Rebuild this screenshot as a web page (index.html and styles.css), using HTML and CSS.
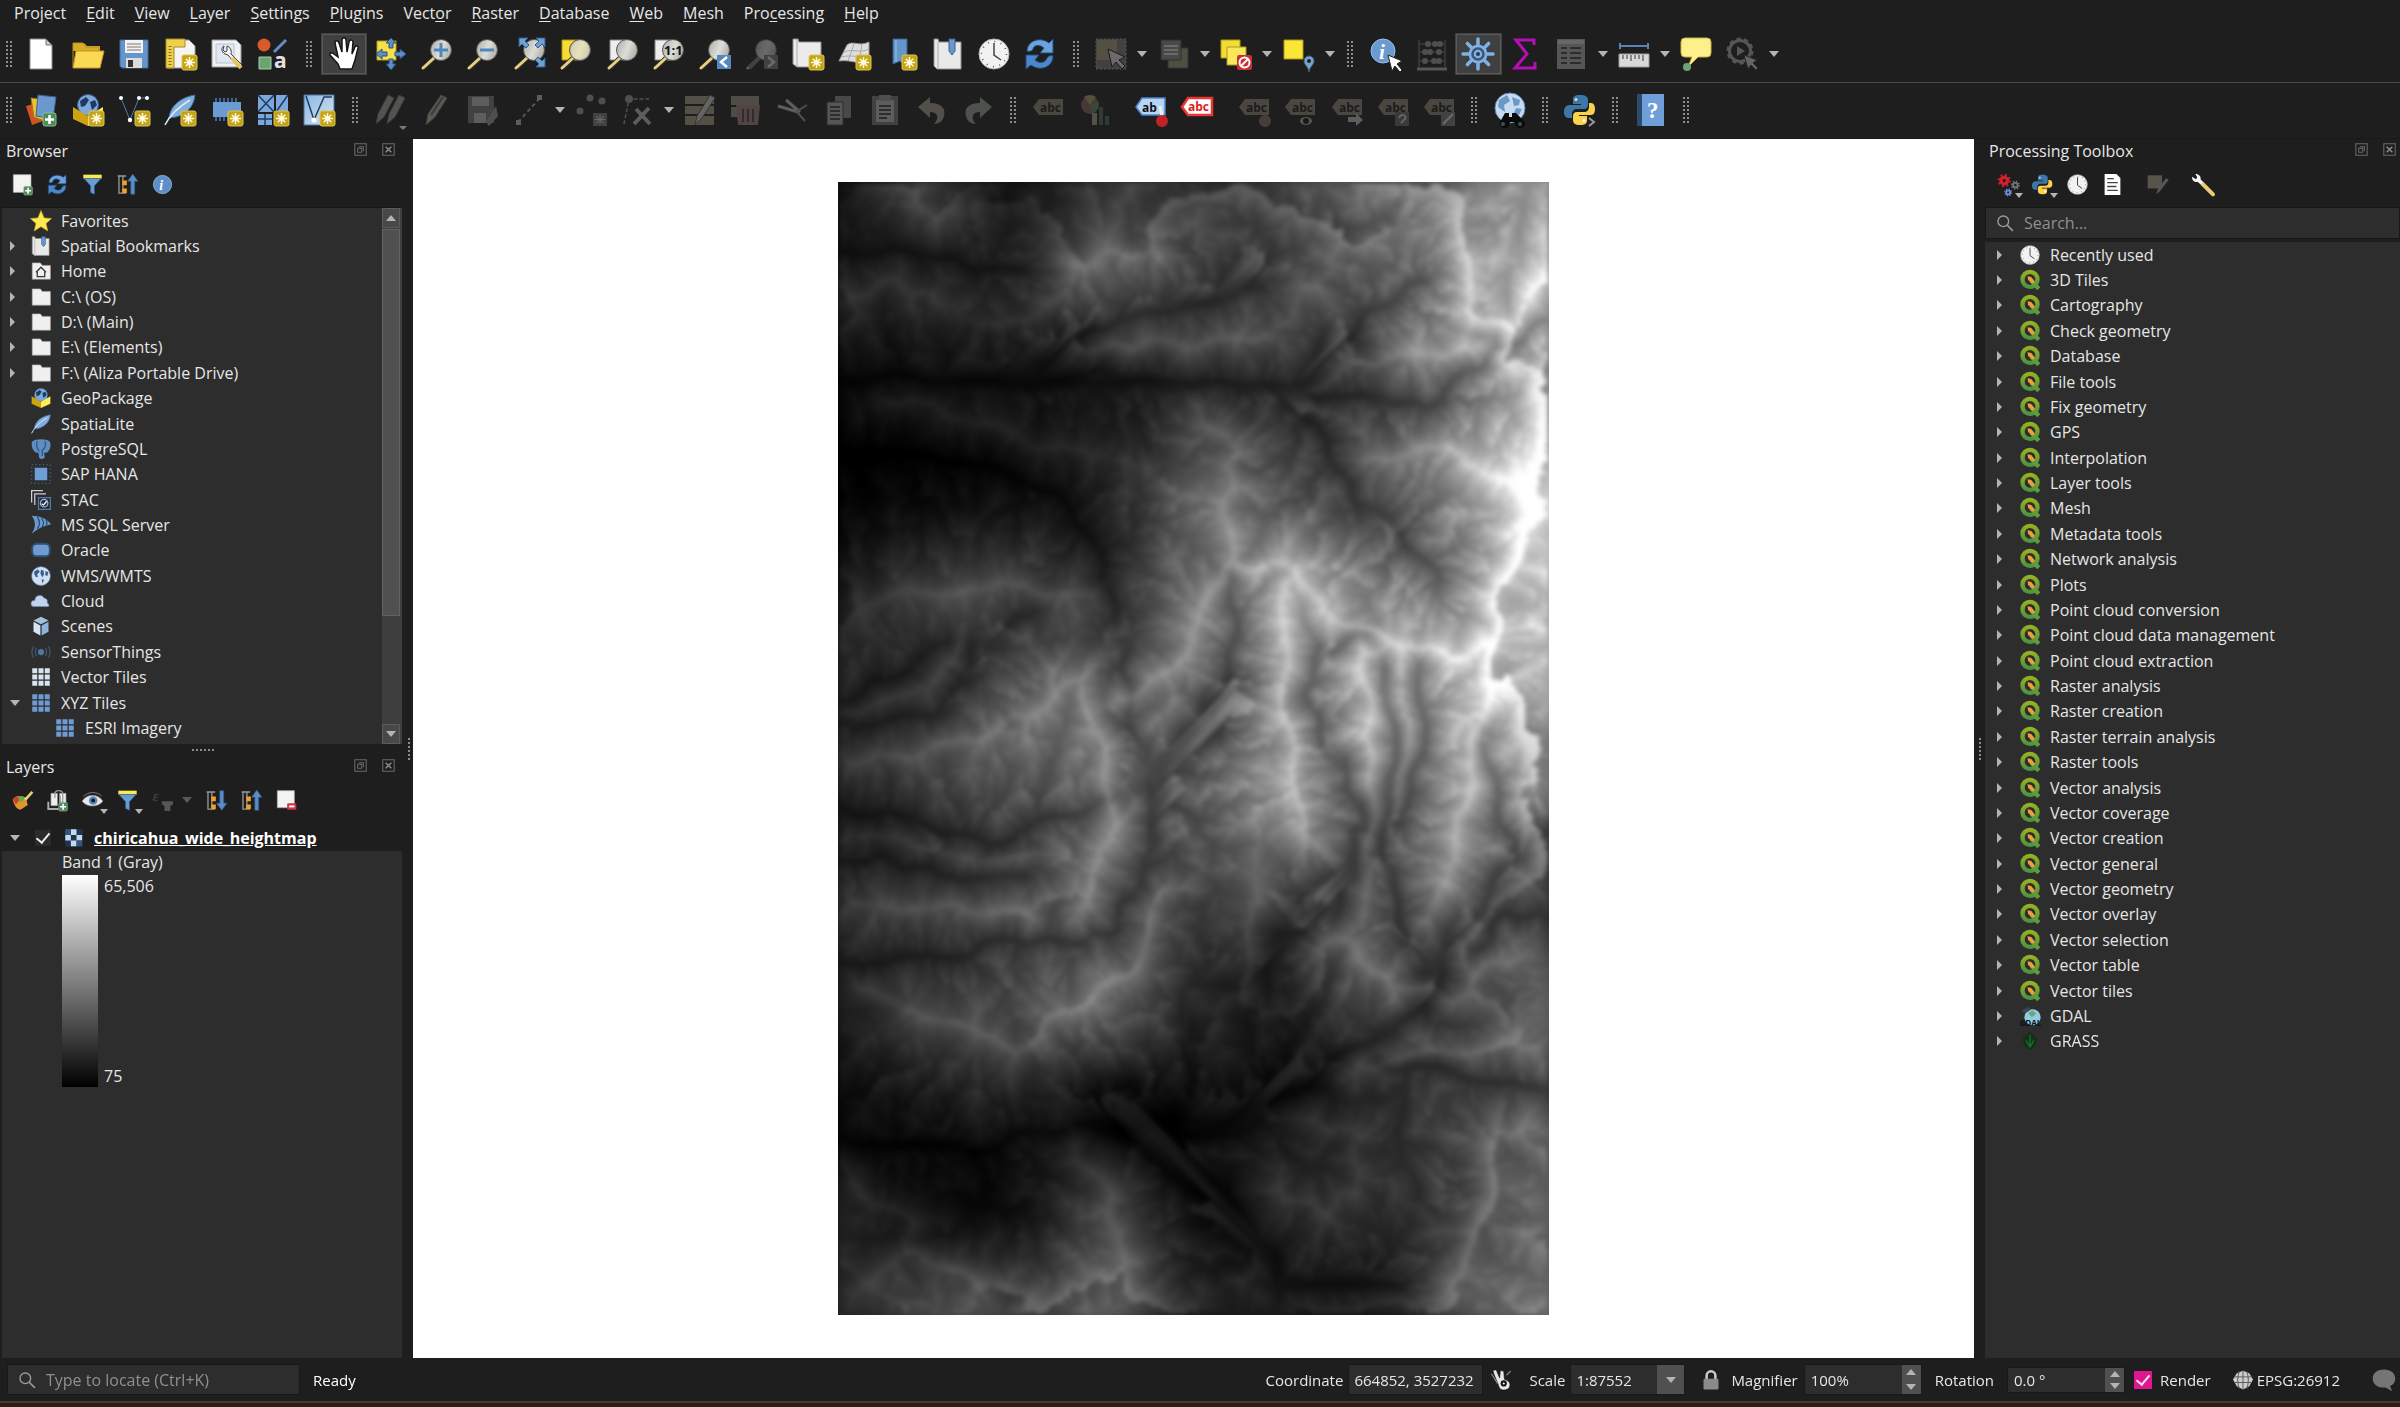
FILE: index.html
```
<!DOCTYPE html>
<html lang="en">
<head>
  <meta charset="UTF-8" />
  <meta name="viewport" content="width=device-width, initial-scale=1.0"/>
  <title>QGIS - chiricahua_wide_heightmap</title>
  <link rel="stylesheet" href="styles.css">
</head>
<body>
  <!-- icon sprite -->
  <svg class="sprite" aria-hidden="true">
    <defs>
      <linearGradient id="glass" x1="0" y1="0" x2="1" y2="0.4"><stop offset="0" stop-color="#a9a9a5"/><stop offset="0.6" stop-color="#deded9"/><stop offset="1" stop-color="#b5b5b0"/></linearGradient>
      <linearGradient id="sky" x1="0" y1="0" x2="1" y2="1"><stop offset="0" stop-color="#8ab6e2"/><stop offset="1" stop-color="#d6e5f5"/></linearGradient>
      <linearGradient id="qgreen" x1="0" y1="0" x2="0" y2="1"><stop offset="0" stop-color="#93b023"/><stop offset="1" stop-color="#4f9440"/></linearGradient>
    </defs>

    <symbol id="b-new" viewBox="0 0 32 32"><rect x="17" y="17" width="15" height="15" rx="2" fill="#c4a318" stroke="#dcc54e"/><path d="M24.500 19v11M19 24.500h11M20.700 20.700l7.600 7.600M28.300 20.700l-7.600 7.600" stroke="#fffbe0" stroke-width="1.500"/><circle cx="24.500" cy="24.500" r="2.200" fill="#fffbe0"/></symbol>
    <symbol id="b-add" viewBox="0 0 32 32"><rect x="18" y="19" width="13" height="13" rx="2" fill="#4f8a5b" stroke="#8bb894"/><path d="M24.500 21v9M20 25.500h9" stroke="#fff" stroke-width="2.500"/></symbol>
    <symbol id="b-mag" viewBox="0 0 32 32"><path d="M13 20L3 30" stroke="#2b2b2b" stroke-width="5"/><path d="M13 20L2 30" stroke="#e9cf80" stroke-width="3" stroke-linecap="round"/><circle cx="20" cy="12" r="10.500" fill="url(#glass)" stroke="#55554f"/></symbol>
    <symbol id="b-label" viewBox="0 0 32 32"><path d="M1 13L7 5h24v16H7z" fill="#8a8672"/><text x="8" y="18" class="tag" fill="#191919">abc</text></symbol>

    <symbol id="i-new" viewBox="0 0 32 32"><path d="M5 1h16l6 6v24H5z" fill="#fff" stroke="#8c8c8c"/><path d="M21 1v6h6z" fill="#c9c9c9" stroke="#777"/></symbol>
    <symbol id="i-open" viewBox="0 0 32 32"><path d="M1 5h11l3 3h13v5H1z" fill="#d8ab28"/><path d="M1 29V5h10l3 4h13v4" fill="none" stroke="#b98d1d"/><path d="M1 30l3-17h28l-4 17z" fill="#fbd955" stroke="#c39a25"/></symbol>
    <symbol id="i-save" viewBox="0 0 32 32"><path d="M2 2h28v28H4l-2-2z" fill="#6595c9" stroke="#3f6a9c"/><path d="M7 2h18v13H7z" fill="#f3f3f3"/><path d="M9 6h14M9 9h14M9 12h14" stroke="#777"/><path d="M8 20h16v10H8z" fill="#dcdcdc"/><path d="M10 22h5v7h-5z" fill="#333"/></symbol>
    <symbol id="i-layout" viewBox="0 0 32 32"><path d="M2 2h22l6 6v22H2z" fill="#f5f5f5" stroke="#999"/><path d="M1 1h19v8H9v21H1z" fill="#eed04c" stroke="#a98c23"/><path d="M5 8v20" stroke="#8a7120" stroke-dasharray="1 2" stroke-width="3"/><use href="#b-new"/></symbol>
    <symbol id="i-layouts" viewBox="0 0 32 32"><path d="M1 2h24l5 5v22H1z" fill="#f1f1f1" stroke="#999"/><path d="M5 6h18v19H5z" fill="#e1e8f2" stroke="#b8c3d4"/><path d="M13 8c-3 1-3 6 1 8l3 1 11 13 3-3-11-11c1-4-1-7-4-8v5l-2 1-2-2z" fill="#f5f5f5" stroke="#444"/><path d="M21 20l9 10" stroke="#e8c45c" stroke-width="4"/></symbol>
    <symbol id="i-style" viewBox="0 0 32 32"><circle cx="7" cy="7" r="6.500" fill="#d95b29"/><path d="M17 14L29 2" stroke="#5f8fc2" stroke-width="3"/><path d="M2 19h12v12H2z" fill="#6da371" stroke="#a9cfab"/><text x="17" y="30" class="big-a" fill="#e2e2e2">a</text></symbol>
    <symbol id="i-hand" viewBox="0 0 32 32"><path d="M12 31l-2-5-8-9c-1-2 2-3 4-1l4 3L7 5c0-3 3-3 4 0l3 9V2c0-3 4-3 4 0l1 12 2-10c1-3 4-2 4 0l-1 12 3-7c1-2 4-1 3 1l-3 12-3 9z" fill="#fff" stroke="#161616" stroke-width="1.500"/></symbol>
    <symbol id="i-panmap" viewBox="0 0 32 32"><path d="M2 3h19v19H2z" fill="#f8e04c" stroke="#b39a1c"/><path d="M16 0l5 5h-3v5h-4V5h-3zM16 32l5-6h-3v-5h-4v5h-3zM1 16l6-5v3h5v4H7v3zM31 16l-6-5v3h-5v4h5v3z" fill="#5f8fc2" stroke="#27517f"/></symbol>
    <symbol id="i-zoomin" viewBox="0 0 32 32"><use href="#b-mag"/><path d="M20 5v14M13 12h14" stroke="#4f86bf" stroke-width="3"/></symbol>
    <symbol id="i-zoomout" viewBox="0 0 32 32"><use href="#b-mag"/><path d="M13 12h14" stroke="#4f86bf" stroke-width="3"/></symbol>
    <symbol id="i-zoomfull" viewBox="0 0 32 32"><use href="#b-mag"/><path d="M5 0h9l-3 3 4 4-3 3-4-4-3 3zM31 0v9l-3-3-4 4-3-3 4-4-3-3zM31 29h-9l3-3-4-4 3-3 4 4 3-3z" fill="#6fa0d4" stroke="#2d5c8f"/></symbol>
    <symbol id="i-zoomsel" viewBox="0 0 32 32"><path d="M2 2h16v20H2z" fill="#f6dc35" stroke="#a8921a"/><use href="#b-mag"/><circle cx="20" cy="12" r="9" fill="#e9e2a8" opacity="0.600"/></symbol>
    <symbol id="i-zoomlayer" viewBox="0 0 32 32"><path d="M3 2h16v20H3z" fill="#ededed" stroke="#888"/><use href="#b-mag"/></symbol>
    <symbol id="i-zoomnative" viewBox="0 0 32 32"><path d="M2 2h16v20H2z" fill="#ededed" stroke="#888"/><use href="#b-mag"/><text x="11" y="17" class="one" fill="#111">1:1</text></symbol>
    <symbol id="i-zoomlast" viewBox="0 0 32 32"><use href="#b-mag"/><path d="M18 17h14v14H18z" fill="#5688bd"/><path d="M28 19l-6 5 6 5" fill="none" stroke="#fff" stroke-width="2.500"/></symbol>
    <symbol id="i-zoomnext" viewBox="0 0 32 32"><use href="#b-mag"/><path d="M3 30L13 20" stroke="#777" stroke-width="4"/><path d="M18 17h14v14H18z" fill="#777"/><path d="M22 19l6 5-6 5" fill="none" stroke="#ddd" stroke-width="2.500"/></symbol>
    <symbol id="i-newmap" viewBox="0 0 32 32"><path d="M1 1h5l1 3h22v25H5L1 26z" fill="#ececec" stroke="#8f8f8f"/><path d="M5 2v27" stroke="#aaa"/><use href="#b-new"/></symbol>
    <symbol id="i-new3d" viewBox="0 0 32 32"><path d="M8 7c6-5 12 2 22-3v19c-9 5-17-2-30 0z" fill="#dedede" stroke="#999"/><path d="M5 14c9-4 14 2 25-3M3 19c10-3 17 2 27-2M15 6L9 23M23 6l-3 18" fill="none" stroke="#aaa"/><use href="#b-new"/></symbol>
    <symbol id="i-newbm" viewBox="0 0 32 32"><path d="M8 1h14v29l-7-7-7 3z" fill="#6595cb" stroke="#365f90"/><path d="M11 2v22" stroke="#9cc0e6"/><use href="#b-new"/></symbol>
    <symbol id="i-bookmarks" viewBox="0 0 32 32"><path d="M2 1h4l1 3h22v27H5l-3-3z" fill="#e9e9e9" stroke="#909090"/><path d="M6 3v27" stroke="#aaa"/><path d="M17 1h6v12l-3 4-3-4z" fill="#6a98cb" stroke="#365f90"/></symbol>
    <symbol id="i-clock" viewBox="0 0 32 32"><circle cx="16" cy="16" r="15" fill="#f2f2f2" stroke="#b6b6b6"/><circle cx="16" cy="16" r="12.500" fill="none" stroke="#555" stroke-width="1.500" stroke-dasharray="1 5.540"/><path d="M16 5v12l7 5" fill="none" stroke="#444" stroke-width="1.500"/></symbol>
    <symbol id="i-refresh" viewBox="0 0 32 32"><path d="M3 13C3 3 16-2 25 5l4-4v14H16l4-5c-5-4-10-3-11 1 0 2-4 3-6 2z" fill="#6ba2dc" stroke="#1f4c80"/><path d="M29 18c0 11-13 16-22 9l-5 4V17h13l-4 5c5 4 10 3 12-2 1-2 4-3 6-2z" fill="#4d87c7" stroke="#1f4c80"/></symbol>
    <symbol id="i-select" viewBox="0 0 32 32"><path d="M1 1h30v30H1z" fill="#777" stroke="#aaa" stroke-dasharray="2 2"/><path d="M2 2h20v20H2z" fill="#a39c7c"/><path d="M13 11l4 18 4-5 6 7 3-3-6-6 6-3z" fill="#ddd" stroke="#111"/></symbol>
    <symbol id="i-form" viewBox="0 0 32 32"><path d="M10 10h20v20H10z" fill="#9b9475" stroke="#555"/><path d="M3 2h20v20H3z" fill="#8a8a8a" stroke="#444"/><path d="M6 8h14M6 12h14M6 16h14" stroke="#ddd" stroke-width="2"/></symbol>
    <symbol id="i-deselect" viewBox="0 0 32 32"><path d="M1 2h19v18H1z" fill="#f5dc32" stroke="#ad951a"/><path d="M7 9h19v18H7z" fill="#fae85a" stroke="#ad951a"/><rect x="17" y="17" width="15" height="15" rx="2" fill="#c92f35"/><circle cx="24.500" cy="24.500" r="5" fill="none" stroke="#fff" stroke-width="2"/><path d="M21 28l7-7" stroke="#fff" stroke-width="2"/></symbol>
    <symbol id="i-selloc" viewBox="0 0 32 32"><path d="M1 2h19v19H1z" fill="#fae637" stroke="#ad951a"/><path d="M26 34c-1-6-5-7-5-11a5 5 0 0 1 10 0c0 4-4 5-5 11z" fill="#7ba3c9" stroke="#365f85"/><circle cx="26" cy="23" r="2" fill="#1e1e1e"/></symbol>
    <symbol id="i-identify" viewBox="0 0 32 32"><circle cx="13" cy="13" r="12" fill="#6b9ad0" stroke="#9cc0e6"/><text x="9" y="21" class="info" fill="#fff">i</text><path d="M18 17l4 16 3-5 5 6 2-2-5-6 5-3z" fill="#fff" stroke="#222"/></symbol>
    <symbol id="i-info" viewBox="0 0 32 32"><circle cx="16" cy="16" r="14" fill="#5f8fc8" stroke="#9cc0e6"/><text x="11" y="25" class="info" fill="#fff">i</text></symbol>
    <symbol id="i-abacus" viewBox="0 0 32 32"><path d="M3 2v27M29 2v27M3 6h26M3 14h26M3 23h26" stroke="#888" stroke-width="1"/><path d="M1 31h30" stroke="#aaa" stroke-width="3"/><g fill="#999"><circle cx="12" cy="6" r="3"/><circle cx="19" cy="6" r="3"/><circle cx="24" cy="6" r="3"/><circle cx="9" cy="14" r="3"/><circle cx="14" cy="14" r="3"/><circle cx="23" cy="14" r="3"/><circle cx="9" cy="23" r="3"/><circle cx="18" cy="23" r="3"/><circle cx="23" cy="23" r="3"/></g></symbol>
    <symbol id="i-gear" viewBox="0 0 32 32"><path d="M16 1v30M1 16h30M5.400 5.400l21.200 21.200M26.600 5.400L5.400 26.600" stroke="currentColor" stroke-width="3.500" stroke-linecap="round"/><circle cx="16" cy="16" r="9.500" fill="currentColor"/><circle cx="16" cy="16" r="5.500" fill="none" stroke="#3b5776" stroke-width="2.500"/><circle cx="16" cy="16" r="2" fill="#2b3a4d"/></symbol>
    <symbol id="i-sigma" viewBox="0 0 32 32"><path d="M25 7V2H7l11 14L6 30h20v-6" fill="none" stroke="#b30fb5" stroke-width="3"/></symbol>
    <symbol id="i-table" viewBox="0 0 32 32"><path d="M2 1h28v30H2z" fill="#aaa"/><path d="M3 4h26" stroke="#d5d5d5" stroke-width="4"/><path d="M6 10h6M15 10h11M6 15h6M15 15h11M6 20h6M15 20h11M6 25h6M15 25h11" stroke="#444" stroke-width="2"/></symbol>
    <symbol id="i-measure" viewBox="0 0 32 32"><path d="M2 8h28M2 5v6M30 5v6" stroke="#5684b5" stroke-width="2"/><path d="M1 16h30v13H1z" fill="#d9d9d9" stroke="#999"/><path d="M5 17v4M9 17v4M13 17v6M17 17v4M21 17v4M25 17v6" stroke="#333"/></symbol>
    <symbol id="i-tip" viewBox="0 0 32 32"><path d="M5 0h22q4 0 4 4v11q0 4-4 4h-9L8 29l4-10H5q-4 0-4-4V4q0-4 4-4z" fill="#fdf08c" stroke="#c7b443"/><circle cx="7" cy="29" r="4" fill="#6da376"/></symbol>
    <symbol id="i-action" viewBox="0 0 32 32"><circle cx="13" cy="13" r="10.500" fill="none" stroke="#aaa" stroke-width="3"/><circle cx="13" cy="13" r="12" fill="none" stroke="#aaa" stroke-width="3" stroke-dasharray="4 3.540"/><path d="M10 8l8 5-8 5z" fill="#aaa"/><path d="M17 17l4 14 3-4 5 5 2-2-5-5 4-3z" fill="#ccc" stroke="#333"/></symbol>

    <symbol id="i-sources" viewBox="0 0 32 32"><path d="M1 12l11-3 6 18-11 4z" fill="#cf5421"/><path d="M6 4l15 2 1 22-13-5z" fill="#ecc133" stroke="#9c7b13"/><path d="M13 1l18 2-3 22-17-3z" fill="#6c99cd" stroke="#3a6293"/><use href="#b-add"/></symbol>
    <symbol id="i-gpkg" viewBox="0 0 32 32"><circle cx="16" cy="11" r="10.500" fill="#7fa9dc" stroke="#365f90"/><path d="M8 7l6-4 3 3-4 6-4 1zM18 8l5-2 2 5-5 5z" fill="#1d3a61"/><path d="M1 13l15 9v10L1 25z" fill="#cfa30f"/><path d="M31 13l-15 9v10l15-7z" fill="#fcec55"/></symbol>
    <symbol id="i-newgpkg" viewBox="0 0 32 32"><use href="#i-gpkg"/><use href="#b-new"/></symbol>
    <symbol id="i-newshp" viewBox="0 0 32 32"><path d="M3 4l9 22L21 4h8" fill="none" stroke="#4d7dae"/><g fill="#fff"><circle cx="3" cy="4" r="2"/><circle cx="12" cy="26" r="2.200"/><circle cx="21" cy="4" r="2"/><circle cx="29" cy="4" r="2"/></g><use href="#b-new"/></symbol>
    <symbol id="i-feather" viewBox="0 0 32 32"><path d="M31 1C18 3 6 11 5 24l7-1c10-3 18-10 19-22z" fill="#82aedd" stroke="#3a6ca3"/><path d="M1 31C7 19 16 12 26 6" fill="none" stroke="#dbe9f7" stroke-width="1.500"/></symbol>
    <symbol id="i-newsl" viewBox="0 0 32 32"><use href="#i-feather"/><use href="#b-new"/></symbol>
    <symbol id="i-newmem" viewBox="0 0 32 32"><path d="M5 4v23M9 4v23M13 4v23M17 4v23M21 4v23M25 4v23" stroke="#3f6591" stroke-width="2"/><path d="M2 8h28v15H2z" fill="#6b9bd3"/><use href="#b-new"/></symbol>
    <symbol id="i-newmesh" viewBox="0 0 32 32"><path d="M1 1h16v17H1zM19 1h12v17H19zM1 20h14v11H1z" fill="#7ba7db"/><path d="M1 1l16 17M17 1L1 18M31 1L19 18M8 20v11M1 25h14" stroke="#1c3c63" stroke-width="1.500"/><use href="#b-new"/></symbol>
    <symbol id="i-newgpx" viewBox="0 0 32 32"><path d="M1 1h30v30H1z" fill="url(#sky)" stroke="#4b739e"/><path d="M3 2l8 24L21 3h8" fill="none" stroke="#223d5c" stroke-width="1.500"/><circle cx="11" cy="26" r="2.500" fill="#fff"/><use href="#b-new"/></symbol>
    <symbol id="i-edits" viewBox="0 0 32 32"><path d="M2 30l2-10L14 1l6 3-10 19zM13 30l2-10L25 1l6 3-10 19z" fill="#a3a39a" stroke="#666"/><path d="M25 32h8l-4 4z" fill="#fff"/></symbol>
    <symbol id="i-pencil" viewBox="0 0 32 32"><path d="M6 31l2-11L21 1l6 3-12 19z" fill="#b5b49c" stroke="#777"/><path d="M11 21L23 3" stroke="#666" stroke-width="2"/></symbol>
    <symbol id="i-saveedit" viewBox="0 0 32 32"><path d="M2 2h26v27H2z" fill="#777"/><path d="M6 3h17v9H6zM8 19h12v10H8z" fill="#bbb"/><path d="M20 28L30 12l2 10-9 10z" fill="#999"/></symbol>
    <symbol id="i-line" viewBox="0 0 32 32"><path d="M5 28L27 4" stroke="#aaa" stroke-width="2" stroke-dasharray="4 3"/><path d="M3 26h5v5H3zM24 1h5v5h-5z" fill="#bbb"/></symbol>
    <symbol id="i-points" viewBox="0 0 32 32"><g fill="#999"><circle cx="5" cy="17" r="3.500"/><circle cx="15" cy="4" r="3.500"/><circle cx="27" cy="7" r="3.500"/></g><path d="M18 19h14v13H18z" fill="#777"/><path d="M25 21v9M20 25.500h10M21 22l8 7M29 22l-8 7" stroke="#ddd"/></symbol>
    <symbol id="i-vertex" viewBox="0 0 32 32"><path d="M2 30L7 5h20" fill="none" stroke="#999" stroke-width="1.500" stroke-dasharray="4 2"/><circle cx="7" cy="5" r="4" fill="#999"/><path d="M12 30l15-16M14 15l14 15" stroke="#bbb" stroke-width="4"/></symbol>
    <symbol id="i-attr" viewBox="0 0 32 32"><path d="M1 2h29v8H1zM1 12h29v8H1zM1 22h29v9H1z" fill="#a29d80"/><path d="M11 31l2-9L26 1l5 3-13 20z" fill="#ccc" stroke="#555"/></symbol>
    <symbol id="i-trash" viewBox="0 0 32 32"><path d="M1 2h28v9H1zM1 13h7v10H1z" fill="#9a8f80"/><path d="M6 11h24l-2 20H8z" fill="#a37c78"/><path d="M13 15v13M18 15v13M23 15v13" stroke="#444" stroke-width="2"/></symbol>
    <symbol id="i-cut" viewBox="0 0 32 32"><path d="M1 12l20 6M9 6l14 12" stroke="#bbb" stroke-width="3"/><path d="M20 17l10-6M20 18l8 9" stroke="#999" stroke-width="2"/></symbol>
    <symbol id="i-copy" viewBox="0 0 32 32"><path d="M12 2h16v22H12z" fill="#888"/><path d="M4 8h16v23H4z" fill="#aaa" stroke="#444"/><path d="M7 13h10M7 17h10M7 21h10M7 25h10" stroke="#444" stroke-width="2"/></symbol>
    <symbol id="i-paste" viewBox="0 0 32 32"><path d="M3 2h26v29H3z" fill="#777"/><path d="M7 6h18v22H7z" fill="#bbb"/><path d="M10 1h12v6H10z" fill="#999"/><path d="M10 12h12M10 16h12M10 20h12M10 24h8" stroke="#444" stroke-width="2"/></symbol>
    <symbol id="i-undo" viewBox="0 0 32 32"><path d="M2 13L14 3v6c12 0 16 6 14 13-1 5-5 8-10 8 5-5 5-12-4-12v6z" fill="#a39c8e"/></symbol>
    <symbol id="i-redo" viewBox="0 0 32 32"><path d="M30 13L18 3v6C6 9 2 15 4 22c1 5 5 8 10 8-5-5-5-12 4-12v6z" fill="#93a193"/></symbol>
    <symbol id="i-lab" viewBox="0 0 32 32"><use href="#b-label"/></symbol>
    <symbol id="i-diagram" viewBox="0 0 32 32"><circle cx="11" cy="11" r="9" fill="#85605c"/><path d="M11 11L5 3a10 10 0 0 1 12 0z" fill="#a3a35f"/><path d="M11 11l8-3a9 9 0 0 1-5 11z" fill="#5f8a5f"/><path d="M13 19h5v12h-5z" fill="#a3a080"/><path d="M20 13h4v18h-4zM26 22h4v9h-4z" fill="#4b6a54"/></symbol>
    <symbol id="i-labpin" viewBox="0 0 32 32"><path d="M1 13L7 4h23v17H7z" fill="#b8d4f5" stroke="#4b86c9" stroke-width="1.500"/><text x="7" y="18" class="tag" fill="#111">ab</text><path d="M25 12l2 10" stroke="#eee" stroke-width="3"/><circle cx="27" cy="27" r="6" fill="#c02327"/></symbol>
    <symbol id="i-labred" viewBox="0 0 32 32"><path d="M1 13L7 4h24v17H7z" fill="#fff" stroke="#e33" stroke-width="2.500"/><text x="7" y="17" class="tag" fill="#e01b1b">abc</text></symbol>
    <symbol id="i-lab1" viewBox="0 0 32 32"><use href="#b-label"/><circle cx="27" cy="27" r="6" fill="#8b6b6b"/></symbol>
    <symbol id="i-lab2" viewBox="0 0 32 32"><use href="#b-label"/><ellipse cx="22" cy="27" rx="6" ry="4" fill="#aaa"/><circle cx="22" cy="27" r="3" fill="#111"/></symbol>
    <symbol id="i-lab3" viewBox="0 0 32 32"><use href="#b-label"/><path d="M17 23h8v-4l7 7-7 6v-4h-8z" fill="#bbb"/></symbol>
    <symbol id="i-lab4" viewBox="0 0 32 32"><use href="#b-label"/><path d="M18 18h14v14H18z" fill="#666"/><path d="M22 24c2-5 8-3 6 1l-4 4" fill="none" stroke="#ccc" stroke-width="2"/></symbol>
    <symbol id="i-lab5" viewBox="0 0 32 32"><use href="#b-label"/><path d="M18 18h14v14H18z" fill="#777"/><path d="M20 30l10-10" stroke="#ddd" stroke-width="2"/></symbol>
    <symbol id="i-metasearch" viewBox="0 0 32 32"><circle cx="16" cy="14" r="15" fill="#c4dbf2" stroke="#5f88b5"/><path d="M5 6l8-5 3 6-6 4 1 7-7-5zM18 3l8 3-1 5-5 1zM22 14l6 1-3 6-5-2z" fill="#6d97c4"/><path d="M11 19h4v4h3v-4h4l9 9a5 5 0 0 1-9 4l-2-4h-4l-1 4a5 5 0 0 1-9-4z" fill="#0b0b0b"/><circle cx="9" cy="30" r="2" fill="#355"/><circle cx="26" cy="30" r="2" fill="#355"/></symbol>
    <symbol id="i-python" viewBox="0 0 32 32"><path d="M16 1c-6 0-7 2-7 5v4h8v1H5c-3 0-5 3-5 7s2 6 5 6h3v-4c0-3 2-5 5-5h7c3 0 4-2 4-4V6c0-3-2-5-8-5z" fill="#3d77a8"/><path d="M16 31c6 0 7-2 7-5v-4h-8v-1h12c3 0 4-3 4-6s-1-6-4-6h-2v4c0 3-2 5-5 5h-7c-3 0-4 2-4 4v4c0 3 2 5 7 5z" fill="#fad24b"/><circle cx="12" cy="5.500" r="1.500" fill="#ddd"/><circle cx="20" cy="26.500" r="1.500" fill="#fff"/></symbol>
    <symbol id="i-console" viewBox="0 0 32 32"><use href="#i-python"/><path d="M25 24l5 4-5 4" fill="none" stroke="#999" stroke-width="2"/></symbol>
    <symbol id="i-help" viewBox="0 0 32 32"><path d="M2 0h27v32H2z" fill="#6f9fd8"/><path d="M2 0h5v32H2z" fill="#2c4b70"/><text x="12" y="24" class="quest" fill="#fff">?</text></symbol>

    <symbol id="i-addsel" viewBox="0 0 32 32"><path d="M2 1h27v27H2z" fill="#f3f3f0" stroke="#aaa"/><use href="#b-add"/></symbol>
    <symbol id="i-removesel" viewBox="0 0 32 32"><path d="M2 1h26v26H2z" fill="#f3f3f3" stroke="#aaa"/><rect x="17" y="20" width="14" height="10" rx="2" fill="#cf3542"/><path d="M20 25h8" stroke="#fff" stroke-width="3"/></symbol>
    <symbol id="i-filter" viewBox="0 0 32 32"><path d="M2 1h28v6H2z" fill="#f7ea52"/><path d="M3 7h26L19 18v13l-6-3V18z" fill="#6a9bd2" stroke="#2d5c8f"/></symbol>
    <symbol id="i-collapse" viewBox="0 0 32 32"><path d="M1 3h13M3 3v26h11M9 3v26" fill="none" stroke="#999" stroke-width="2"/><path d="M8 10h7v7H8zM8 22h7v7H8z" fill="#f3a023"/><path d="M24 0l8 11h-5v20h-6V11h-5z" fill="#5b8cc4" stroke="#2b5685"/></symbol>
    <symbol id="i-expand" viewBox="0 0 32 32"><path d="M1 3h13M3 3v26h11M9 3v26" fill="none" stroke="#999" stroke-width="2"/><path d="M8 10h7v7H8zM8 22h7v7H8z" fill="#f3a023"/><path d="M24 31l8-11h-5V1h-6v19h-5z" fill="#5b8cc4" stroke="#2b5685"/></symbol>
    <symbol id="i-brush" viewBox="0 0 32 32"><path d="M1 14l6-5 14 2 3 12-11 7c-5-1-9-4-12-16z" fill="#e0962c"/><path d="M1 14l6-5 6 4-7 9z" fill="#d23c2e"/><path d="M9 10l8-1 2 6-7 4z" fill="#5fae4c"/><path d="M31 3L20 15" stroke="#ecd27c" stroke-width="4"/></symbol>
    <symbol id="i-addgroup" viewBox="0 0 32 32"><path d="M2 18v11h16" fill="none" stroke="#aaa" stroke-width="3"/><path d="M6 5h10v19H6zM19 5h10v19H19z" fill="#eee" stroke="#888"/><path d="M12 12V6q0-5 6-5t6 5v13h-4V8" fill="none" stroke="#999" stroke-width="2"/><use href="#b-add"/></symbol>
    <symbol id="i-eye" viewBox="0 0 32 32"><path d="M0 17C8 5 24 5 32 17 24 27 8 27 0 17z" fill="#e8e8e8" stroke="#777"/><circle cx="17" cy="16" r="6.500" fill="#5a88bd"/><circle cx="17" cy="16" r="3" fill="#0e1a2b"/><path d="M2 10C10 2 22 2 30 9" fill="none" stroke="#aaa"/></symbol>
    <symbol id="i-expr" viewBox="0 0 32 32"><text x="1" y="16" class="info" fill="#777">ε</text><path d="M15 17h17v5l-4 2v8h-9v-8l-4-2z" fill="#aaa"/></symbol>
    <symbol id="i-gears" viewBox="0 0 32 32"><g fill="none"><circle cx="11" cy="10" r="5" stroke="#d3202b" stroke-width="5"/><circle cx="11" cy="10" r="8.500" stroke="#d3202b" stroke-width="3" stroke-dasharray="3 3.670"/><circle cx="28" cy="17" r="3.500" stroke="#777" stroke-width="3"/><circle cx="28" cy="17" r="6" stroke="#777" stroke-width="2" stroke-dasharray="2 2.710"/><circle cx="17" cy="28" r="3" stroke="#6f86cf" stroke-width="3"/><circle cx="17" cy="28" r="5" stroke="#6f86cf" stroke-width="2" stroke-dasharray="2 1.930"/></g></symbol>
    <symbol id="i-doc" viewBox="0 0 32 32"><path d="M4 0h18l6 6v26H4z" fill="#fff"/><path d="M8 7h10M8 13h16M8 19h14M8 25h16" stroke="#444" stroke-width="2"/></symbol>
    <symbol id="i-editmodel" viewBox="0 0 32 32"><path d="M1 2h22v20H1z" fill="#aea78a"/><path d="M14 31l3-9L29 6l4 3-13 17z" fill="#aaa"/></symbol>
    <symbol id="i-wrench" viewBox="0 0 32 32"><path d="M0 4c0 6 4 9 9 8l6 6 4-4-6-6c1-4-2-8-8-8l3 5-2 3z" fill="#f4f4f4"/><path d="M17 16l15 15" stroke="#e6cf72" stroke-width="6" stroke-linecap="round"/></symbol>

    <symbol id="i-star" viewBox="0 0 32 32"><path d="M16-1l5 12 12 1-9 8 3 12-11-7-11 7 3-12-9-8 12-1z" fill="#fbe94f" stroke="#c9a91a"/></symbol>
    <symbol id="i-folder" viewBox="0 0 32 32"><path d="M2 3h13l3 4h13v22H2z" fill="#f0f0f0" stroke="#aaa"/></symbol>
    <symbol id="i-home" viewBox="0 0 32 32"><use href="#i-folder"/><path d="M8 18l8-8 8 8M10 17v8h12v-8" fill="none" stroke="#333" stroke-width="2"/></symbol>
    <symbol id="i-elephant" viewBox="0 0 32 32"><path d="M2 4C7-1 25-1 30 4c3 7 0 15-5 18h-4l1 8q-5 4-9 0l-1-8C4 24-1 10 2 4z" fill="#5f8fc2"/><path d="M10 3c-3 7 0 12 3 17M22 3c3 7 0 12-4 15v9" fill="none" stroke="#315682" stroke-width="2"/></symbol>
    <symbol id="i-chip" viewBox="0 0 32 32"><path d="M1 1h30v30H1z" fill="none" stroke="#44658c" stroke-width="2" stroke-dasharray="2 4"/><path d="M6 6h20v20H6z" fill="#6f9dd5"/></symbol>
    <symbol id="i-stac" viewBox="0 0 32 32"><path d="M1 20V1h18M6 24V6h18" fill="none" stroke="#ccd" stroke-width="2"/><path d="M12 12h19v19H12z" fill="#1f2c3c" stroke="#56789f" stroke-width="2"/><circle cx="21" cy="21" r="6" fill="none" stroke="#9bb7d6" stroke-width="2"/><path d="M17 22l3 2 5-6" fill="none" stroke="#fff" stroke-width="2"/></symbol>
    <symbol id="i-mssql" viewBox="0 0 32 32"><path d="M1 1c12 0 26 5 31 14-11 2-21 6-31 15C8 19 8 10 1 1z" fill="#6a98cf"/><path d="M10 3c5 7 5 13 0 19M17 5c4 6 4 9 1 14M24 8c2 3 2 6 0 8" fill="none" stroke="#294a72" stroke-width="2"/></symbol>
    <symbol id="i-oracle" viewBox="0 0 32 32"><rect x="2" y="6" width="28" height="20" rx="7" fill="#6f9bd1" stroke="#2e5077" stroke-width="3"/></symbol>
    <symbol id="i-globe" viewBox="0 0 32 32"><circle cx="16" cy="16" r="15" fill="#cfe0f2" stroke="#6b8fb8"/><path d="M5 9l6-4 3 4-4 4 1 5-4-1-2-5zM16 6l4 1 1 6-3 5-3-6zM23 8l5 2-2 6-3-1zM17 21l4 1-3 6z" fill="#3b5f8a"/></symbol>
    <symbol id="i-cloud" viewBox="0 0 32 32"><path d="M4 25a5 5 0 0 1 2-10 8 8 0 0 1 15-4 6 6 0 0 1 5 8 4 4 0 0 1 2 6z" fill="#c0d5ec" stroke="#4d7099"/></symbol>
    <symbol id="i-cube" viewBox="0 0 32 32"><path d="M16 1l12 6-12 6L4 7z" fill="#a5c0de"/><path d="M4 9l11 6v16L4 25z" fill="#d5e3f2"/><path d="M28 9l-11 6v16l11-6z" fill="#8fb2d9"/></symbol>
    <symbol id="i-sensor" viewBox="0 0 32 32"><circle cx="16" cy="16" r="5" fill="#4d78a8"/><path d="M9 9q-4 7 0 14M23 9q4 7 0 14M4 7q-5 9 0 18M28 7q5 9 0 18" fill="none" stroke="#41566f" stroke-width="2"/></symbol>
    <symbol id="i-grid" viewBox="0 0 32 32"><path d="M2 2h8v8H2zM12 2h8v8h-8zM22 2h8v8h-8zM2 12h8v8H2zM12 12h8v8h-8zM22 12h8v8h-8zM2 22h8v8H2zM12 22h8v8h-8zM22 22h8v8h-8z" fill="currentColor"/></symbol>
    <symbol id="i-q" viewBox="0 0 32 32"><circle cx="16" cy="15" r="12" fill="none" stroke="url(#qgreen)" stroke-width="7"/><path d="M18 17l12 13" stroke="#5f9c3c" stroke-width="7"/><path d="M12 10l6 1 6 8-4 3-7-6z" fill="#ef9d3e"/></symbol>
    <symbol id="i-gdal" viewBox="0 0 32 32"><circle cx="20" cy="18" r="13" fill="#8fcbe3"/><path d="M13 11l7-4 6 5-7 6z" fill="#72a56c"/><path d="M3 7l10-6 4 5-9 6z" fill="#3c4652"/><text x="-1" y="32" class="gdal" fill="#0b1116">GDAL</text></symbol>
    <symbol id="i-grass" viewBox="0 0 32 32"><path d="M16 1l12 11-4 14-8 4-8-4-4-14z" fill="#143018"/><path d="M16 6v20M16 26l-6-11M16 26l6-11" stroke="#17732a" stroke-width="2"/></symbol>
    <symbol id="i-raster" viewBox="0 0 32 32"><path d="M2 2h28v28H2z" fill="#1f3450"/><path d="M11 2h9v9h-9zM2 11h9v9H2zM20 11h9v9h-9zM11 20h9v9h-9z" fill="#c3d7ee"/><path d="M2 2h9v9H2zM20 20h9v9h-9z" fill="#35557d"/></symbol>
    <symbol id="i-search" viewBox="0 0 32 32"><circle cx="13" cy="13" r="9.500" fill="none" stroke="#999" stroke-width="2.500"/><path d="M20 20l10 10" stroke="#999" stroke-width="3"/></symbol>
    <symbol id="i-float" viewBox="0 0 32 32"><path d="M2 2h28v28H2z" fill="none" stroke="#6b6b6b" stroke-width="2.500"/><path d="M9 13h10v10H9zM12 9h11v11" fill="none" stroke="#6b6b6b" stroke-width="2.500"/></symbol>
    <symbol id="i-close" viewBox="0 0 32 32"><path d="M2 2h28v28H2z" fill="none" stroke="#6b6b6b" stroke-width="2.500"/><path d="M9 9l14 14M23 9L9 23" stroke="#8f8f8f" stroke-width="3.500"/></symbol>
    <symbol id="i-extents" viewBox="0 0 32 32"><path d="M4 2l5-1 5 12 1-11 5 1 1 12c7 2 10 7 7 12s-13 5-15-1C11 19 6 10 4 2z" fill="#e8e8e8" stroke="#111"/><path d="M2 7l9 14M24 9l6-6" stroke="#999" stroke-width="1.500"/><circle cx="20" cy="21" r="4.500" fill="#111"/><circle cx="20" cy="21" r="1.500" fill="#fff"/></symbol>
    <symbol id="i-lock" viewBox="0 0 32 32"><path d="M9 15V9a7 7 0 0 1 14 0v6" fill="none" stroke="#ccc" stroke-width="4"/><rect x="4" y="14" width="24" height="17" rx="2" fill="#8a8a8a"/></symbol>
    <symbol id="i-crs" viewBox="0 0 32 32"><path d="M16 1l10 4 6 10-6 11-10 5-10-5L0 15 6 5z" fill="#ccc"/><path d="M2 11h28M2 20h28M16 1v30M10 2q-5 14 0 28M22 2q5 14 0 28" fill="none" stroke="#555" stroke-width="1.500"/></symbol>
    <symbol id="i-bubble" viewBox="0 0 32 32"><path d="M16 2c9 0 15 5 15 12 0 5-3 9-7 10l3 7-9-5C8 27 1 22 1 14S8 2 16 2z" fill="#757575"/></symbol>
  </svg>

  <header class="top">
    <nav class="menubar">
      <a href="#">Pro<u>j</u>ect</a>
      <a href="#"><u>E</u>dit</a>
      <a href="#"><u>V</u>iew</a>
      <a href="#"><u>L</u>ayer</a>
      <a href="#"><u>S</u>ettings</a>
      <a href="#"><u>P</u>lugins</a>
      <a href="#">Vect<u>o</u>r</a>
      <a href="#"><u>R</u>aster</a>
      <a href="#"><u>D</u>atabase</a>
      <a href="#"><u>W</u>eb</a>
      <a href="#"><u>M</u>esh</a>
      <a href="#">Pro<u>c</u>essing</a>
      <a href="#"><u>H</u>elp</a>
    </nav>
    <div class="toolbar-row"><div class="toolbar toolbar-main" id="toolbar-main"></div></div>
    <div class="toolbar-row"><div class="toolbar toolbar-edit" id="toolbar-edit"></div></div>
  </header>

  <main class="workspace">
    <aside class="dock dock-left">
      <section class="panel browser">
        <div class="panel-head">
          <h2>Browser</h2>
          <button class="head-btn" aria-label="Float"><svg><use href="#i-float"/></svg></button>
          <button class="head-btn" aria-label="Close"><svg><use href="#i-close"/></svg></button>
        </div>
        <div class="panel-tools" id="browser-tools"></div>
        <div class="tree-box">
          <ul class="tree browser-tree" id="browser-tree"></ul>
          <div class="scrollbar">
            <button class="scroll-btn" aria-label="Scroll up"><i class="tri-up"></i></button>
            <div class="scroll-track"><div class="scroll-thumb"></div></div>
            <button class="scroll-btn" aria-label="Scroll down"><i class="tri-down"></i></button>
          </div>
        </div>
      </section>
      <div class="split-h"><i class="dots-h"></i></div>
      <section class="panel layers">
        <div class="panel-head">
          <h2>Layers</h2>
          <button class="head-btn" aria-label="Float"><svg><use href="#i-float"/></svg></button>
          <button class="head-btn" aria-label="Close"><svg><use href="#i-close"/></svg></button>
        </div>
        <div class="panel-tools" id="layer-tools"></div>
        <div class="layer-row">
          <i class="tri-down"></i>
          <input type="checkbox" id="layer-1" class="layer-check" checked>
          <svg class="tree-icon"><use href="#i-raster"/></svg>
          <label for="layer-1">chiricahua_wide_heightmap</label>
        </div>
        <div class="legend">
          <p>Band 1 (Gray)</p>
          <div class="ramp-row">
            <div class="ramp"></div>
            <div class="ramp-labels"><span>65,506</span><span>75</span></div>
          </div>
        </div>
      </section>
    </aside>

    <div class="split-v"><i class="dots-v"></i></div>
    <div class="map">
      <canvas id="heightmap" width="355" height="566"></canvas>
    </div>
    <div class="split-v split-right"><i class="dots-v"></i></div>

    <aside class="dock dock-right">
      <div class="panel-head">
        <h2>Processing Toolbox</h2>
        <button class="head-btn" aria-label="Float"><svg><use href="#i-float"/></svg></button>
        <button class="head-btn" aria-label="Close"><svg><use href="#i-close"/></svg></button>
      </div>
      <div class="panel-tools" id="toolbox-tools"></div>
      <label class="search-box">
        <svg><use href="#i-search"/></svg>
        <input type="text" placeholder="Search…" aria-label="Search">
      </label>
      <div class="toolbox-box">
        <ul class="tree toolbox-tree" id="toolbox-tree"></ul>
      </div>
    </aside>
  </main>

  <footer class="status">
    <label class="locate">
      <svg><use href="#i-search"/></svg>
      <input type="text" placeholder="Type to locate (Ctrl+K)" aria-label="Locate">
    </label>
    <span class="ready">Ready</span>
    <label for="coord">Coordinate</label>
    <input id="coord" class="field coord" type="text" value="664852, 3527232">
    <button class="status-btn" aria-label="Toggle extents"><svg><use href="#i-extents"/></svg></button>
    <label for="scale">Scale</label>
    <div class="combo">
      <select id="scale"><option>1:87552</option></select>
      <span class="combo-arrow"><i class="tri-down"></i></span>
    </div>
    <button class="status-btn lock" aria-label="Lock scale"><svg><use href="#i-lock"/></svg></button>
    <label for="magnifier">Magnifier</label>
    <div class="spin">
      <input id="magnifier" type="text" value="100%">
      <div class="spin-btns"><button aria-label="Increase magnifier"><i class="tri-up"></i></button><button aria-label="Decrease magnifier"><i class="tri-down"></i></button></div>
    </div>
    <label for="rotation">Rotation</label>
    <div class="spin spin-low">
      <input id="rotation" type="text" value="0.0 °">
      <div class="spin-btns"><button aria-label="Increase rotation"><i class="tri-up"></i></button><button aria-label="Decrease rotation"><i class="tri-down"></i></button></div>
    </div>
    <input type="checkbox" id="render" class="render-check" checked>
    <label for="render">Render</label>
    <button class="crs"><svg><use href="#i-crs"/></svg>EPSG:26912</button>
    <button class="status-btn messages" aria-label="Messages"><svg><use href="#i-bubble"/></svg></button>
  </footer>
  <div class="desktop-edge"></div>

  <script src="script.js"></script>
</body>
</html>
```
FILE: styles.css
```
* {
  box-sizing: border-box;
}
html, body {
  height: 100%;
}
body {
  margin: 0;
  display: flex;
  flex-direction: column;
  overflow: hidden;
  background: #1e1e1e;
  color: #e6e6e6;
  font-family: "Open Sans", "Noto Sans", sans-serif;
  font-size: 16px;
  line-height: 20px;
}
button, input, select {
  font: inherit;
  color: inherit;
  margin: 0;
}
button {
  background: none;
  border: 0;
  padding: 0;
}
ul, p, h2 {
  margin: 0;
  padding: 0;
}
svg {
  display: block;
  overflow: visible;
}
symbol {
  overflow: visible;
}
.sprite {
  position: absolute;
  width: 0;
  height: 0;
}

/* text inside icons */
.tag { font: bold 12px "Open Sans", sans-serif; }
.one { font: bold 13px "Open Sans", sans-serif; }
.big-a { font: bold 21px "Open Sans", sans-serif; }
.info { font: italic bold 21px "Liberation Serif", serif; }
.quest { font: bold 23px "Liberation Serif", serif; }
.gdal { font: bold 13px "Open Sans", sans-serif; }

/* arrows */
.tri-down, .tri-up, .tri-right {
  display: block;
  width: 0;
  height: 0;
  flex: none;
  border: 5px solid transparent;
}
.tri-down { border-top: 6px solid #b4b4b4; border-bottom: 0; }
.tri-up { border-bottom: 6px solid #b4b4b4; border-top: 0; }
.tri-right { border-left: 5px solid #b4b4b4; border-right: 0; }

/* menu and toolbars */
.menubar {
  display: flex;
  height: 27px;
  padding: 3px 4px;
}
.menubar a {
  padding: 0 10px;
  color: inherit;
  text-decoration: none;
}
.menubar u {
  text-underline-offset: 2px;
}
.toolbar-row {
  height: 56px;
  border-bottom: 1px solid #4a4a4a;
}
.toolbar-row + .toolbar-row {
  border-bottom-color: #191919;
}
.toolbar {
  display: flex;
  height: 54px;
  align-items: center;
}
.toolbar-main { width: 1782px; }
.toolbar-edit { width: 1698px; height: 53px; }
.tool, .tool-menu, .grip, .sep {
  min-width: 0;
  display: flex;
  align-items: center;
  justify-content: center;
}
.tool {
  flex: 46 0 0;
  height: 42px;
}
.tool svg {
  width: 32px;
  height: 32px;
}
.tool-menu {
  flex: 16 0 0;
  height: 42px;
}
.tool.on {
  color: #7fb1e6;
  background: #404040;
  background-clip: content-box;
  outline: 1px solid #5a5a5a;
  outline-offset: -2px;
}
.off svg, .off .tri-down {
  opacity: 0.4;
}
.grip {
  flex: 24 0 0;
}
.grip:first-child {
  flex: 18 0 0;
}
.grip i {
  width: 8px;
  height: 28px;
  background: radial-gradient(#8c8c8c 1px, transparent 1px) 0 0 / 4px 4px;
}
.sep {
  flex: 10 0 0;
}

/* workspace */
.workspace {
  flex: 1;
  min-height: 0;
  display: flex;
}
.dock {
  display: flex;
  flex-direction: column;
}
.dock-left {
  width: 404px;
  padding-left: 2px;
}
.dock-right {
  width: 415px;
}
.panel {
  display: flex;
  flex-direction: column;
  min-height: 0;
}
.browser {
  height: 605px;
}
.layers {
  flex: 1;
  padding-right: 2px;
}
.panel-head {
  display: flex;
  align-items: center;
  gap: 15px;
  height: 24px;
  padding: 0 8px 0 4px;
}
.browser .panel-head {
  padding-right: 9px;
}
.layers .panel-head {
  padding-right: 7px;
}
.dock-right .panel-head {
  padding-right: 4px;
}
.panel-head h2 {
  flex: 1;
  font-size: 16px;
  font-weight: normal;
}
.head-btn svg {
  width: 13px;
  height: 13px;
}
.head-btn {
  margin-bottom: 4px;
}
.panel-tools {
  display: flex;
  align-items: center;
  gap: 14px;
  height: 44px;
  padding: 0 10px 2px;
}
.dock-right .panel-tools {
  padding-left: 12px;
}
.panel-tools button {
  display: flex;
  align-items: center;
  position: relative;
}
.panel-tools svg {
  width: 21px;
  height: 21px;
}
.panel-tools .corner {
  position: absolute;
  right: -5px;
  bottom: -3px;
  border-width: 5px 4px 0;
}
.panel-tools .wide {
  gap: 9px;
}
.panel-tools .apart {
  margin-left: 10px;
}

/* trees */
.tree-box {
  flex: 1;
  min-height: 0;
  display: flex;
  background: #2d2d2d;
  border-top: 1px solid #181818;
  margin-right: 2px;
  overflow: hidden;
}
.tree {
  flex: 1;
  display: grid;
  grid-auto-rows: 1fr;
  list-style: none;
}
.tree li {
  display: flex;
  align-items: center;
  padding-left: 8px;
  white-space: nowrap;
}
.tree .expander {
  width: 21px;
  display: flex;
}
.tree-icon {
  width: 20px;
  height: 20px;
  flex: none;
  margin-right: 10px;
}
.tree .child {
  padding-left: 32px;
}
.browser-tree {
  height: 558px;
}
.pale { color: #d9e4f1; }
.blue { color: #6d9bd2; }
.scrollbar {
  width: 20px;
  display: flex;
  flex-direction: column;
  padding-right: 2px;
  background: #3e3e3e;
}
.scroll-btn {
  height: 20px;
  display: flex;
  align-items: center;
  justify-content: center;
  background: #484848;
  border: 1px solid #5c5c5c;
}
.scroll-track {
  flex: 1;
}
.scroll-thumb {
  height: 78%;
  margin-top: 1px;
  background: #505050;
  border: 1px solid #626262;
}
.split-h {
  height: 11px;
  display: flex;
  align-items: center;
  justify-content: center;
}
.dots-h {
  width: 24px;
  height: 4px;
  background: radial-gradient(#8c8c8c 1px, transparent 1px) 0 0 / 4px 4px;
}
.split-v {
  width: 9px;
  display: flex;
  align-items: center;
  justify-content: center;
}
.split-right {
  width: 11px;
}
.dots-v {
  width: 4px;
  height: 24px;
  background: radial-gradient(#8c8c8c 1px, transparent 1px) 0 0 / 4px 4px;
}

/* layers */
.layer-row {
  display: flex;
  align-items: center;
  height: 27px;
  padding-left: 8px;
  margin-top: 1px;
}
.layer-row label {
  font-weight: bold;
  color: #fff;
  text-decoration: underline;
}
.layer-row .tri-down {
  margin-right: 15px;
}
.layer-check, .render-check {
  appearance: none;
  display: grid;
  place-items: center;
  width: 16px;
  height: 16px;
  background: #2b2b2b;
}
.layer-check {
  margin-right: 13px;
}
.layer-check:checked::after, .render-check:checked::after {
  content: "";
  width: 6px;
  height: 11px;
  margin-bottom: 3px;
  border: solid #f0f0f0;
  border-width: 0 2px 2px 0;
  transform: rotate(40deg);
}
.legend {
  flex: 1;
  background: #2d2d2d;
  padding: 1px 0 0 60px;
}
.legend p {
  padding-bottom: 3px;
}
.ramp-row {
  display: flex;
  gap: 6px;
}
.ramp {
  width: 36px;
  height: 212px;
  background: linear-gradient(#fff, #000);
}
.ramp-labels {
  display: flex;
  flex-direction: column;
  justify-content: space-between;
  padding: 1px 0;
}

/* map */
.map {
  flex: 1;
  min-width: 0;
  display: flex;
  align-items: center;
  justify-content: center;
  background: #fff;
}
.map canvas {
  height: 93%;
  aspect-ratio: 355 / 566;
}

/* toolbox */
.search-box, .locate {
  display: flex;
  align-items: center;
  background: #2d2d2d;
  border: 1px solid #181818;
}
.search-box {
  height: 32px;
  padding-left: 10px;
  gap: 10px;
  margin-bottom: 3px;
}
.search-box svg, .locate svg {
  width: 18px;
  height: 18px;
}
.search-box input, .locate input {
  flex: 1;
  min-width: 0;
  border: 0;
  padding: 0;
  background: none;
}
.search-box input::placeholder, .locate input::placeholder {
  color: #8f8f8f;
  opacity: 1;
}
.toolbox-box {
  flex: 1;
  background: #2d2d2d;
}
.toolbox-tree {
  height: 812px;
}
.toolbox-tree li {
  padding-left: 12px;
}
.toolbox-tree .expander {
  width: 23px;
}

/* status bar */
.status {
  display: flex;
  align-items: center;
  height: 43px;
  padding: 0 4px 0 7px;
  font-size: 15px;
}
.locate {
  width: 293px;
  height: 31px;
  gap: 10px;
  padding-left: 10px;
}
.locate input {
  font-size: 16px;
}
.ready {
  flex: 1;
  padding-left: 13px;
  color: #fff;
}
.field, .combo, .spin {
  height: 31px;
  background: #2d2d2d;
  border: 1px solid #191919;
}
.coord {
  width: 135px;
  margin: 0 7px 0 5px;
  padding: 0 5px;
}
.status-btn svg {
  width: 22px;
  height: 22px;
}
.status-btn {
  margin-right: 17px;
}
.combo {
  display: flex;
  position: relative;
  width: 115px;
  margin: 0 16px 0 5px;
}
.combo select {
  appearance: none;
  flex: 1;
  border: 0;
  padding: 0 5px;
  background: none;
}
.combo-arrow {
  position: absolute;
  top: 0;
  right: 0;
  width: 27px;
  height: 29px;
  display: flex;
  align-items: center;
  justify-content: center;
  background: #505050;
  pointer-events: none;
}
.lock {
  margin-right: 10px;
}
.lock svg {
  width: 20px;
}
.spin {
  display: flex;
  width: 118px;
  margin: 0 13px 0 6px;
}
.spin-low {
  height: 26px;
  margin: 0 9px 0 13px;
}
.spin input {
  flex: 1;
  min-width: 0;
  border: 0;
  padding: 0 6px;
  background: none;
}
.spin-btns {
  width: 19px;
  display: flex;
  flex-direction: column;
  background: #505050;
}
.spin-btns button {
  flex: 1;
  display: flex;
  align-items: center;
  justify-content: center;
}
.render-check {
  width: 18px;
  height: 18px;
  margin-right: 8px;
  background: #e0158f;
}
.crs {
  display: flex;
  align-items: center;
  gap: 4px;
  margin: 0 32px 0 22px;
}
.crs svg {
  width: 20px;
  height: 20px;
}
.messages {
  margin: 0;
}
.messages svg {
  width: 24px;
  height: 24px;
}
.desktop-edge {
  height: 6px;
  background: #2f1e12;
  border-top: 2px solid #47392f;
}
```
FILE: script.js
```
// toolbar entries: "|" grip, "-" separator, ["icon", "title", flags]
// flags: o = disabled, v = drop-down arrow, x = checked, c = corner arrow, a = extra gap
const mainTools = [
  "|", ["new", "New Project"], ["open", "Open Project"], ["save", "Save Project"],
  ["layout", "New Print Layout"], ["layouts", "Layout Manager"], ["style", "Style Manager"],
  "|", ["hand", "Pan Map", "x"], ["panmap", "Pan Map to Selection"], ["zoomin", "Zoom In"],
  ["zoomout", "Zoom Out"], ["zoomfull", "Zoom Full"], ["zoomsel", "Zoom to Selection"],
  ["zoomlayer", "Zoom to Layer"], ["zoomnative", "Zoom to Native Resolution"],
  ["zoomlast", "Zoom Last"], ["zoomnext", "Zoom Next", "o"], ["newmap", "New Map View"],
  ["new3d", "New 3D Map View"], ["newbm", "New Spatial Bookmark"],
  ["bookmarks", "Show Spatial Bookmarks"], ["clock", "Temporal Controller"], ["refresh", "Refresh"],
  "|", ["select", "Select Features", "ov"], ["form", "Select by Value", "ov"],
  ["deselect", "Deselect Features", "v"], ["selloc", "Select by Location", "v"],
  "|", ["identify", "Identify Features"], ["abacus", "Field Calculator", "o"],
  ["gear", "Processing Toolbox", "x"], ["sigma", "Statistical Summary"],
  ["table", "Attribute Table", "ov"], ["measure", "Measure Line", "v"],
  ["tip", "Show Map Tips"], ["action", "Run Feature Action", "ov"]
];

const editTools = [
  "|", ["sources", "Data Source Manager"], ["newgpkg", "New GeoPackage Layer"],
  ["newshp", "New Shapefile Layer"], ["newsl", "New SpatiaLite Layer"],
  ["newmem", "New Temporary Scratch Layer"], ["newmesh", "New Mesh Layer"], ["newgpx", "New GPX Layer"],
  "|", ["edits", "Current Edits", "o"], ["pencil", "Toggle Editing", "o"],
  ["saveedit", "Save Layer Edits", "o"], ["line", "Digitize with Segment", "ov"],
  ["points", "Add Feature", "o"], ["vertex", "Vertex Tool", "ov"],
  ["attr", "Modify Attributes", "o"], ["trash", "Delete Selected", "o"], ["cut", "Cut Features", "o"],
  ["copy", "Copy Features", "o"], ["paste", "Paste Features", "o"], ["undo", "Undo", "o"], ["redo", "Redo", "o"],
  "|", ["lab", "Layer Labeling Options", "o"], ["diagram", "Layer Diagram Options", "o"],
  "-", ["labpin", "Highlight Pinned Labels"], ["labred", "Toggle Unplaced Labels"],
  "-", ["lab1", "Pin/Unpin Labels", "o"], ["lab2", "Show/Hide Labels", "o"], ["lab3", "Move Label", "o"],
  ["lab4", "Rotate Label", "o"], ["lab5", "Change Label Properties", "o"],
  "|", ["metasearch", "MetaSearch"], "|", ["console", "Python Console"], "|", ["help", "Help Contents"], "|"
];

function toolHtml(t) {
  if (t === "|") return `<span class="grip"><i></i></span>`;
  if (t === "-") return `<span class="sep"></span>`;
  const [icon, title, flags = ""] = t;
  const off = flags.includes("o") ? " off" : "";
  const on = flags.includes("x") ? " on" : "";
  let html = `<button class="tool${off}${on}" title="${title}"><svg><use href="#i-${icon}"/></svg></button>`;
  if (flags.includes("v")) {
    html += `<button class="tool-menu" aria-label="${title} menu"><i class="tri-down"></i></button>`;
  }
  return html;
}

function panelToolHtml([icon, title, flags = ""]) {
  const cls = [flags.includes("o") ? "off" : "", flags.includes("v") ? "wide" : "", flags.includes("a") ? "apart" : ""].join(" ");
  const arrow = flags.includes("v") ? `<i class="tri-down"></i>` : flags.includes("c") ? `<i class="tri-down corner"></i>` : "";
  return `<button class="${cls}" title="${title}"><svg><use href="#i-${icon}"/></svg>${arrow}</button>`;
}

function rowHtml([icon, name, arrow = "", cls = ""]) {
  const child = cls.includes("child") ? "child" : "";
  return `<li class="${child}"><span class="expander">${arrow ? `<i class="tri-${arrow}"></i>` : ""}</span>` +
    `<svg class="tree-icon ${cls.replace("child", "")}"><use href="#i-${icon}"/></svg>${name}</li>`;
}

function fill(id, items, fn) {
  document.getElementById(id).innerHTML = items.map(fn).join("");
}

fill("toolbar-main", mainTools, toolHtml);
fill("toolbar-edit", editTools, toolHtml);

fill("browser-tools", [
  ["addsel", "Add Selected Layers"], ["refresh", "Refresh"], ["filter", "Filter Browser"],
  ["collapse", "Collapse All"], ["info", "Properties"]
], panelToolHtml);

fill("layer-tools", [
  ["brush", "Layer Styling"], ["addgroup", "Add Group"], ["eye", "Manage Map Themes", "c"],
  ["filter", "Filter Legend", "c"], ["expr", "Filter by Expression", "ov"],
  ["expand", "Expand All"], ["collapse", "Collapse All"], ["removesel", "Remove Layer"]
], panelToolHtml);

fill("toolbox-tools", [
  ["gears", "Models", "c"], ["python", "Scripts", "c"], ["clock", "History"],
  ["doc", "Results Viewer"], ["editmodel", "Edit In-Place", "oa"], ["wrench", "Options", "a"]
], panelToolHtml);

fill("browser-tree", [
  ["star", "Favorites"],
  ["bookmarks", "Spatial Bookmarks", "right"],
  ["home", "Home", "right"],
  ["folder", "C:\\ (OS)", "right"],
  ["folder", "D:\\ (Main)", "right"],
  ["folder", "E:\\ (Elements)", "right"],
  ["folder", "F:\\ (Aliza Portable Drive)", "right"],
  ["gpkg", "GeoPackage"],
  ["feather", "SpatiaLite"],
  ["elephant", "PostgreSQL"],
  ["chip", "SAP HANA"],
  ["stac", "STAC"],
  ["mssql", "MS SQL Server"],
  ["oracle", "Oracle"],
  ["globe", "WMS/WMTS"],
  ["cloud", "Cloud"],
  ["cube", "Scenes"],
  ["sensor", "SensorThings"],
  ["grid", "Vector Tiles", "", "pale"],
  ["grid", "XYZ Tiles", "down", "blue"],
  ["grid", "ESRI Imagery", "", "blue child"],
  ["grid", "", "", "blue child"]
], rowHtml);

const groups = ["3D Tiles", "Cartography", "Check geometry", "Database", "File tools", "Fix geometry",
  "GPS", "Interpolation", "Layer tools", "Mesh", "Metadata tools", "Network analysis", "Plots",
  "Point cloud conversion", "Point cloud data management", "Point cloud extraction",
  "Raster analysis", "Raster creation", "Raster terrain analysis", "Raster tools",
  "Vector analysis", "Vector coverage", "Vector creation", "Vector general", "Vector geometry",
  "Vector overlay", "Vector selection", "Vector table", "Vector tiles"];

fill("toolbox-tree", [
  ["clock", "Recently used", "right"],
  ...groups.map(name => ["q", name, "right"]),
  ["gdal", "GDAL", "right"],
  ["grass", "GRASS", "right"]
], rowHtml);

// ---- heightmap ----
// coarse elevations, 9 columns x 12 rows
const base = [
  [20, 50, 25, 50, 60, 75, 100, 110, 145],
  [30, 35, 50, 80, 70, 80, 105, 145, 175],
  [12, 20, 25, 30, 50, 60, 80, 125, 190],
  [6, 12, 20, 35, 85, 85, 85, 135, 215],
  [22, 50, 60, 55, 105, 145, 135, 150, 175],
  [45, 60, 85, 100, 105, 135, 155, 175, 180],
  [35, 60, 85, 105, 100, 130, 115, 135, 155],
  [50, 55, 75, 90, 65, 65, 95, 100, 85],
  [30, 55, 70, 85, 40, 32, 70, 65, 95],
  [14, 26, 34, 20, 22, 28, 40, 70, 85],
  [28, 15, 18, 55, 25, 35, 40, 60, 95],
  [30, 65, 70, 85, 40, 35, 40, 80, 105]
];

// main drainage and crest lines on a 1465 x 1504 survey grid
const valleys = [
  [2, 260, 160, 260, 360, 272, 560, 250, 660, 270, 810, 270, 920, 280, 1110, 290, 1210, 300, 1300, 250, 1380, 215, 1464, 185],
  [920, 280, 1010, 350, 1060, 420, 1160, 470, 1240, 530],
  [950, 270, 1040, 210, 1110, 165, 1210, 130],
  [2, 90, 160, 95, 260, 110, 380, 120],
  [410, 240, 520, 195, 640, 170, 740, 160, 860, 130],
  [2, 360, 160, 360, 360, 390, 480, 430, 550, 510, 570, 580],
  [2, 690, 100, 660, 230, 610],
  [2, 720, 190, 710, 270, 660, 290, 610, 410, 570],
  [2, 830, 160, 850, 310, 880, 460, 840, 580, 820],
  [812, 530, 817, 610, 800, 680, 750, 730, 680, 770, 657, 830, 652, 900, 600, 950, 560, 1000, 460, 1010, 360, 1005, 210, 1030, 2, 1035],
  [1090, 600, 1000, 620, 967, 670, 990, 730, 1050, 790, 1077, 850, 1040, 920, 1020, 970, 920, 1000, 840, 1070],
  [1130, 650, 1150, 770, 1120, 870, 1150, 980, 1210, 1050],
  [1464, 860, 1390, 900, 1290, 990, 1210, 1090, 1060, 1150, 960, 1200, 760, 1250, 560, 1250, 410, 1260, 260, 1290, 2, 1270],
  [1464, 980, 1380, 970, 1310, 1020],
  [1464, 1210, 1260, 1180, 1110, 1170],
  [660, 1270, 810, 1370, 920, 1450, 1160, 1470],
  [2, 900, 110, 900, 210, 920, 390, 920],
  [1330, 730, 1360, 830, 1390, 890],
  [590, 620, 600, 700, 610, 780, 650, 820],
  [1200, 640, 1205, 760, 1150, 860]
];
const ridges = [
  [1464, 440, 1362, 540, 1362, 610, 1262, 630, 1142, 610, 1002, 570, 942, 510, 812, 505, 802, 420, 822, 360, 742, 300],
  [1362, 610, 1322, 720, 1292, 830, 1252, 930],
  [922, 530, 922, 670, 942, 770, 962, 870],
  [790, 530, 682, 650, 582, 690],
  [502, 660, 392, 710, 262, 740, 112, 760, 2, 770],
  [502, 670, 552, 770, 562, 870, 502, 970],
  [522, 550, 392, 540, 162, 545, 22, 560],
  [1464, 440, 1262, 350, 1082, 370],
  [1464, 130, 1362, 230, 1192, 225],
  [482, 110, 580, 90, 662, 100],
  [1292, 20, 1302, 170, 1400, 200],
  [82, 280, 212, 300, 362, 340, 522, 370],
  [962, 1010, 1062, 1010, 1142, 1080],
  [662, 940, 602, 1050, 462, 1100, 362, 1150, 62, 1070],
  [482, 1280, 562, 1350, 592, 1464],
  [1464, 1260, 1362, 1260, 1342, 1370, 1262, 1470],
  [912, 1340, 992, 1370, 1062, 1340, 1072, 1270, 972, 1240],
  [1072, 1170, 1262, 1160, 1412, 1150],
  [22, 1470, 162, 1420, 282, 1470],
  [22, 1330, 162, 1390],
  [1362, 1030, 1262, 1090],
  [162, 10, 200, 60], [22, 150, 122, 130, 200, 160],
  [562, 210, 700, 215, 820, 215],
  [1080, 620, 1100, 720, 1090, 790],
  [112, 960, 262, 965, 400, 980], [862, 950, 830, 1080]
];

const canvas = document.getElementById("heightmap");
const W = canvas.width, H = canvas.height, N = W * H;
const owner = new Uint8Array(N);

let seed = 7;
function rnd() {
  seed = (seed * 16807) % 2147483647;
  return seed / 2147483647;
}

function trace(line, kind) {
  for (let k = 0; k + 3 < line.length; k += 2) {
    const x0 = line[k] * W / 1465, y0 = line[k + 1] * H / 1504;
    const x1 = line[k + 2] * W / 1465, y1 = line[k + 3] * H / 1504;
    const n = Math.ceil(Math.hypot(x1 - x0, y1 - y0));
    const a = Math.atan2(y1 - y0, x1 - x0);
    for (let i = 0; i < n; i++) {
      const w = Math.sin(i / n * Math.PI * 2) * 2;
      const px = Math.min(W - 1, Math.max(0, (x0 + (x1 - x0) * i / n - Math.sin(a) * w) | 0));
      const py = Math.min(H - 1, Math.max(0, (y0 + (y1 - y0) * i / n + Math.cos(a) * w) | 0));
      owner[py * W + px] = kind;
    }
  }
}

// chamfer distance to every cell on one set of lines
function distance(kind) {
  const d = new Float32Array(N).fill(999);
  for (let i = 0; i < N; i++) if (owner[i] === kind) d[i] = 0;
  const relax = (i, j, c) => { if (d[j] + c < d[i]) d[i] = d[j] + c; };
  for (let y = 1; y < H; y++) {
    for (let x = 1; x < W - 1; x++) {
      const i = y * W + x;
      relax(i, i - 1, 1); relax(i, i - W, 1); relax(i, i - W - 1, 1.414); relax(i, i - W + 1, 1.414);
    }
  }
  for (let y = H - 2; y >= 0; y--) {
    for (let x = W - 2; x > 0; x--) {
      const i = y * W + x;
      relax(i, i + 1, 1); relax(i, i + W, 1); relax(i, i + W + 1, 1.414); relax(i, i + W - 1, 1.414);
    }
  }
  for (let x = 0; x < W; x++) d[x] = d[W + x];
  for (let y = 0; y < H; y++) {
    d[y * W] = d[y * W + 1];
    d[y * W + W - 1] = d[y * W + W - 2];
  }
  return d;
}

function cubic(p0, p1, p2, p3, t) {
  return p1 + 0.5 * t * (p2 - p0 + t * (2 * p0 - 5 * p1 + 4 * p2 - p3 + t * (3 * (p1 - p2) + p3 - p0)));
}
function baseAt(u, v) {
  const gx = u * 8, gy = v * 11;
  const ix = Math.min(7, gx | 0), iy = Math.min(10, gy | 0);
  const cell = (r, c) => base[Math.min(11, Math.max(0, r))][Math.min(8, Math.max(0, c))];
  const rows = [-1, 0, 1, 2].map(r => cubic(cell(iy + r, ix - 1), cell(iy + r, ix), cell(iy + r, ix + 1), cell(iy + r, ix + 2), gx - ix));
  return cubic(rows[0], rows[1], rows[2], rows[3], gy - iy);
}

// box blur with running sums, edges clamped
function blur(src, r) {
  const pass = (a, count, len, step, jump) => {
    const out = new Float32Array(N);
    for (let k = 0; k < count; k++) {
      const o = k * jump;
      const at = i => a[o + Math.min(len - 1, Math.max(0, i)) * step];
      let sum = 0;
      for (let i = -r; i <= r; i++) sum += at(i);
      for (let i = 0; i < len; i++) {
        out[o + i * step] = sum / (2 * r + 1);
        sum += at(i + r + 1) - at(i - r);
      }
    }
    return out;
  };
  return pass(pass(src, H, W, 1, W), W, H, W, 1);
}

valleys.forEach(l => trace(l, 1));
ridges.forEach(l => trace(l, 2));
const dv = distance(1), dr = distance(2);

const land = new Float32Array(N), broad = new Float32Array(N);
let rough = new Float32Array(N);
for (let i = 0; i < N; i++) rough[i] = rnd() - 0.5;
const rough2 = blur(blur(rough, 3), 3), rough3 = blur(blur(rough, 7), 7);
for (let y = 0; y < H; y++) {
  for (let x = 0; x < W; x++) {
    const i = y * W + x;
    land[i] = Math.max(3, baseAt(x / (W - 1), y / (H - 1)));
    broad[i] = (dv[i] - dr[i]) / (dv[i] + dr[i] + 12) + Math.exp(-dr[i] / 12) - Math.exp(-dv[i] / 12);
  }
}

// flood the surface from its edges, lowest first, to get the drainage tree
const LEVELS = 4096;
const buckets = Array.from({ length: LEVELS }, () => []);
const level = i => Math.max(0, Math.min(LEVELS - 1,
  (600 + land[i] * 5 + broad[i] * 320 + rough[i] * 50 + rough2[i] * 900 + rough3[i] * 2600) | 0));
const to = new Int32Array(N).fill(-2);
const order = [];
for (let x = 0; x < W; x++) for (const i of [x, (H - 1) * W + x]) { to[i] = -1; buckets[level(i)].push(i); }
for (let y = 1; y < H - 1; y++) for (const i of [y * W, y * W + W - 1]) { to[i] = -1; buckets[level(i)].push(i); }
const around = [[1, 0], [0, 1], [-1, 0], [0, -1], [1, 1], [-1, 1], [-1, -1], [1, -1]];
for (let l = 0; l < LEVELS; l++) {
  for (let k = 0; k < buckets[l].length; k++) {
    const i = buckets[l][k], x = i % W, y = (i / W) | 0;
    order.push(i);
    for (const [dx, dy] of around) {
      const nx = x + dx, ny = y + dy, j = ny * W + nx;
      if (nx < 0 || ny < 0 || nx >= W || ny >= H || to[j] !== -2) continue;
      to[j] = i;
      buckets[Math.max(l, level(j))].push(j);
    }
  }
}

// upstream area, then river profiles: steep at the heads, flat downstream
const area = new Float32Array(N).fill(1);
for (let k = N - 1; k >= 0; k--) if (to[order[k]] >= 0) area[to[order[k]]] += area[order[k]];
const rise = new Float32Array(N);
for (const i of order) {
  if (to[i] < 0) continue;
  const diagonal = Math.abs(to[i] - i) !== 1 && Math.abs(to[i] - i) !== W;
  rise[i] = rise[to[i]] + (diagonal ? 1.414 : 1) * Math.pow(area[i] + 2, -0.45);
}
const mean = blur(blur(rise, 9), 9);
const detail = new Float32Array(N);
let power = 0;
for (let i = 0; i < N; i++) {
  detail[i] = rise[i] - mean[i];
  power += detail[i] * detail[i];
}
const scale = 1 / Math.sqrt(power / N);

const ctx = canvas.getContext("2d");
const img = ctx.createImageData(W, H);
for (let i = 0; i < N; i++) {
  const b = land[i];
  const fine = Math.max(-2.5, Math.min(2.5, detail[i] * scale));
  const g = b + fine * (3 + b * 0.1) + broad[i] * (4 + b * 0.14);
  img.data[i * 4] = img.data[i * 4 + 1] = img.data[i * 4 + 2] = Math.max(0, g);
  img.data[i * 4 + 3] = 255;
}
ctx.putImageData(img, 0, 0);
ctx.filter = "blur(1px)";
ctx.drawImage(canvas, 0, 0);
```
